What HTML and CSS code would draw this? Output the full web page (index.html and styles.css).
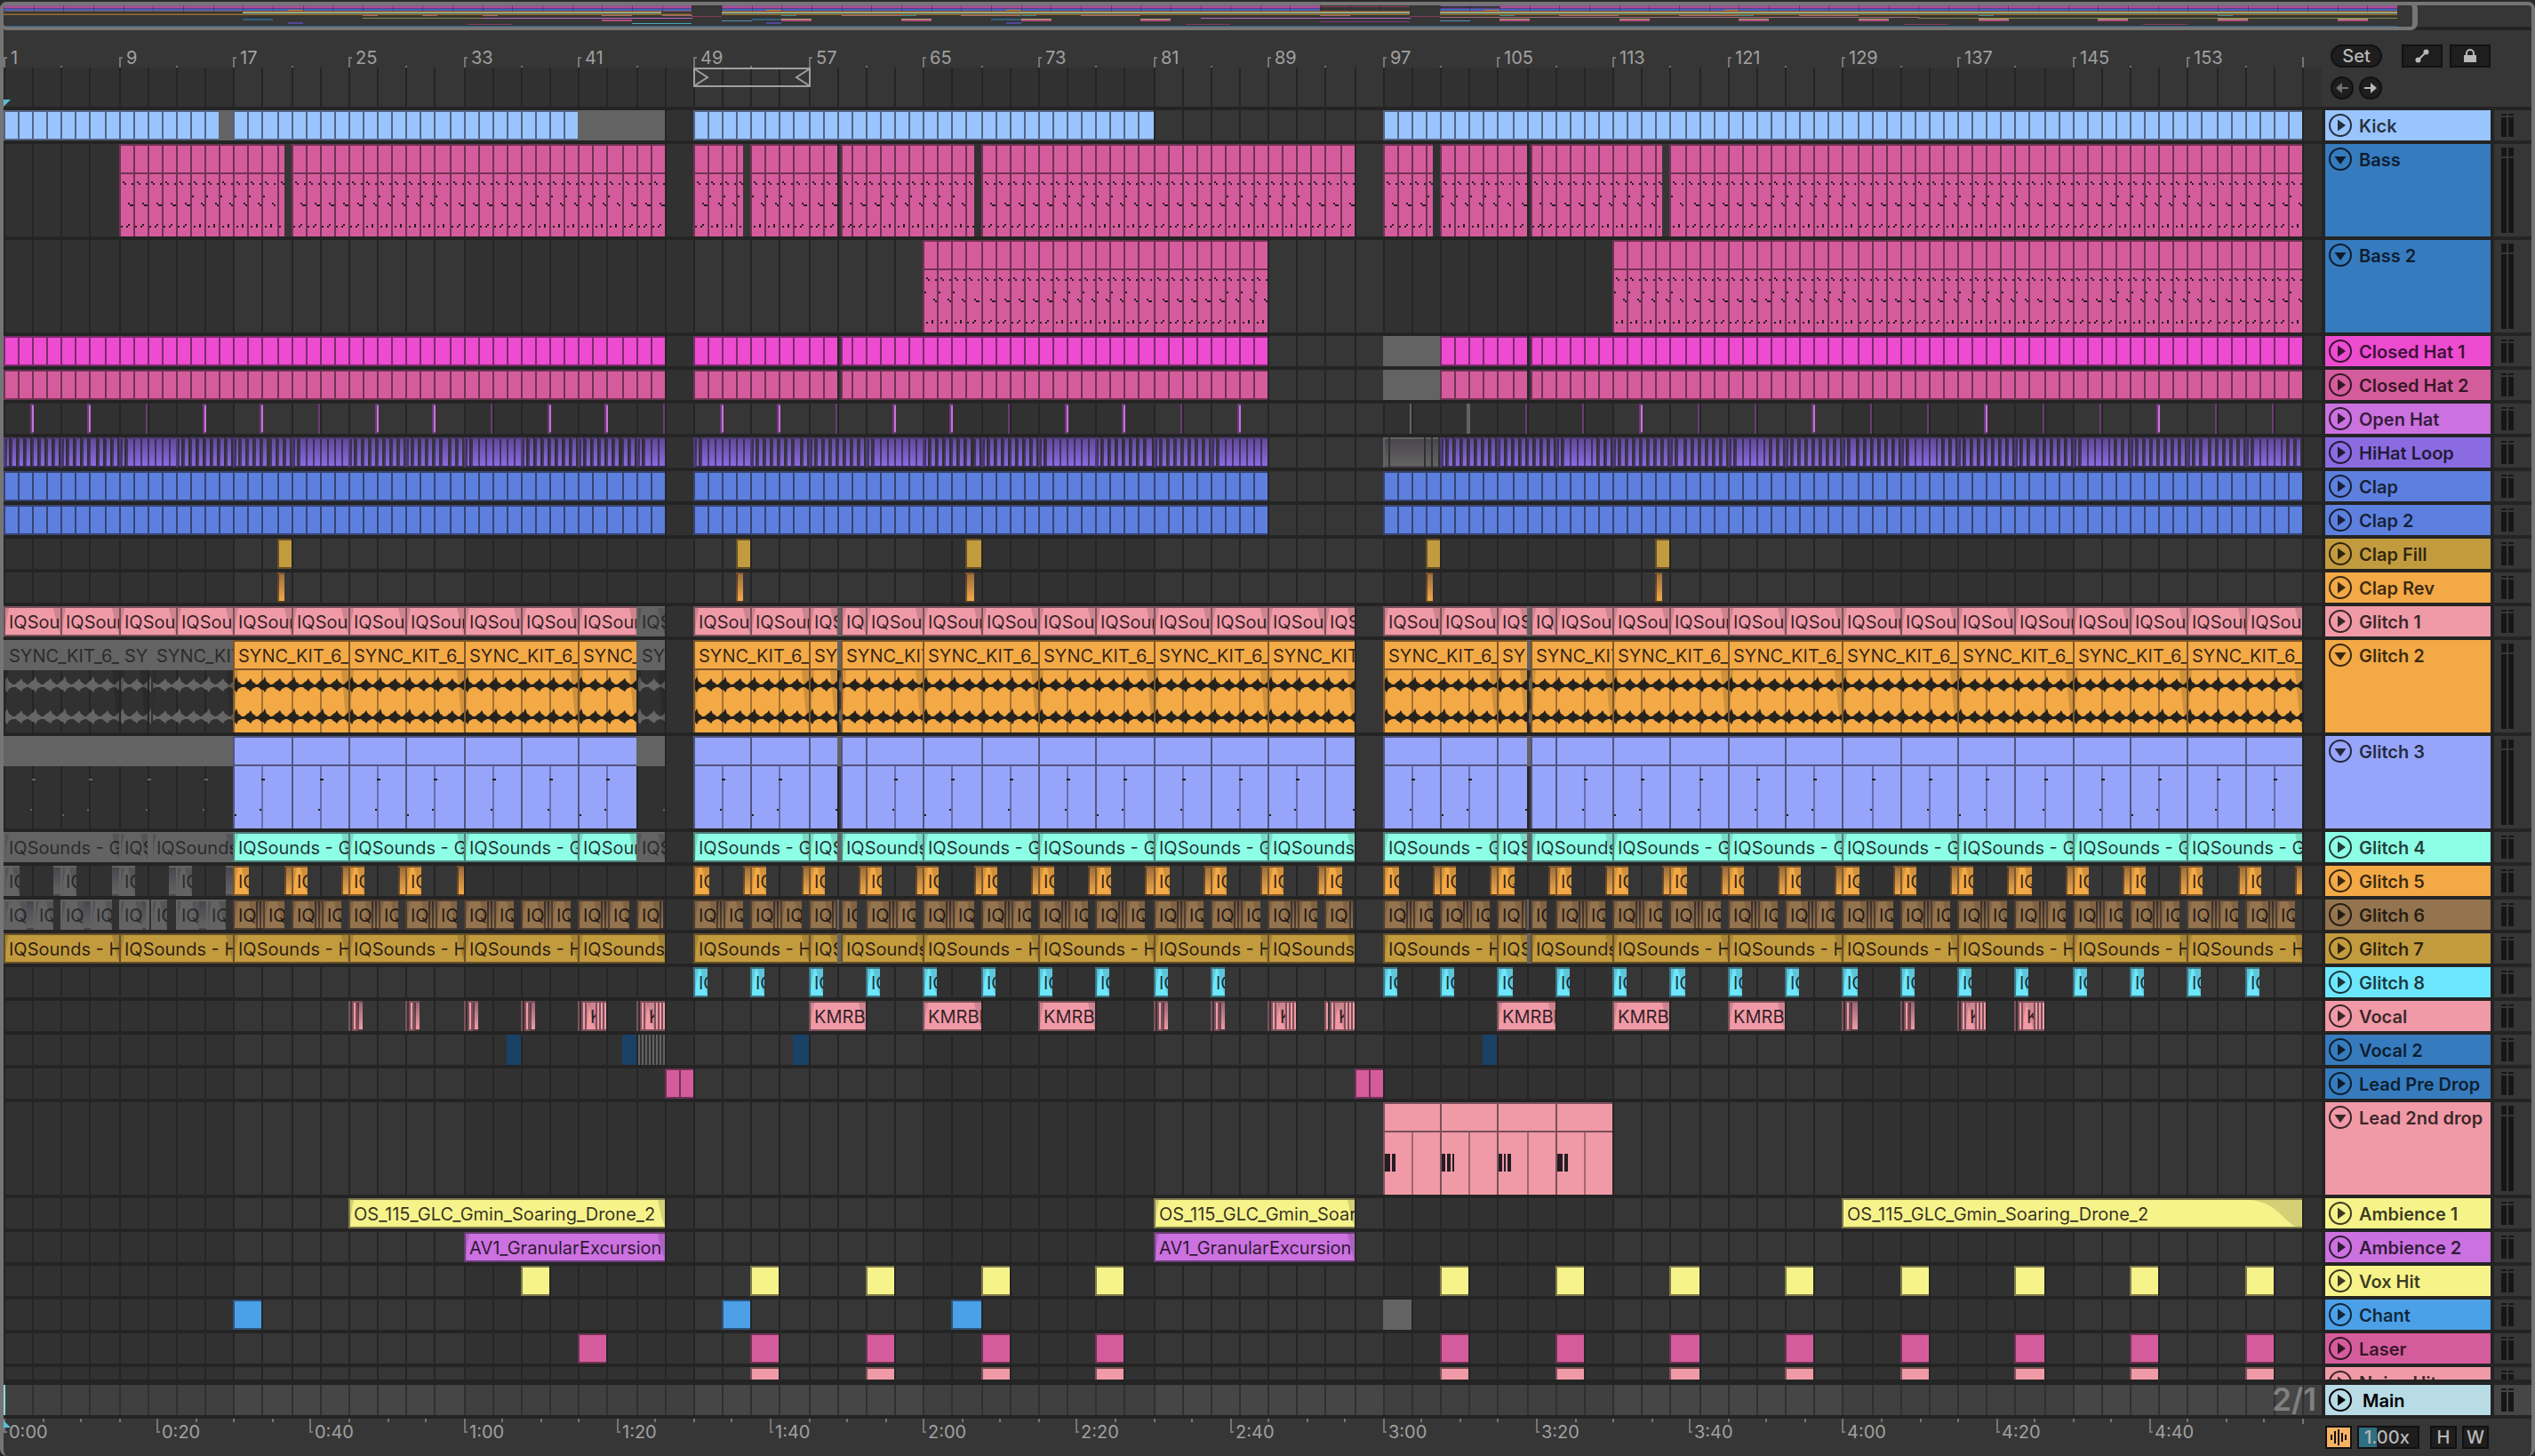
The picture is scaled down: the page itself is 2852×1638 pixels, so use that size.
FILE: index.html
```html
<!DOCTYPE html>
<html lang="en">

<head>
  <title>Arrangement</title>
  <meta charset="utf-8">
  <link rel="stylesheet" href="styles.css">
</head>

<body>
  <div class="window">

    <!-- Overview of the whole set -->
    <div class="overview">
      <svg id="overview" preserveAspectRatio="none"></svg>
      <div class="overview_frame"></div>
    </div>

    <!-- Bar ruler, loop brace and locator buttons -->
    <div class="top">
      <div class="rulers">
        <div class="ruler" id="ruler"></div>
        <div class="scrub" id="scrub"></div>
      </div>
      <div class="controls">
        <div class="controls_row">
          <button class="btn btn_set">Set</button>
          <button class="btn btn_tool btn_automation" aria-label="Automation mode">
            <svg width="16" height="16" viewBox="0 0 16 16"><path d="M3 13L13 3" stroke="currentColor" stroke-width="2" /><circle cx="3.5" cy="12.5" r="3" fill="currentColor" /><circle cx="12.5" cy="3.5" r="3" fill="currentColor" /></svg>
          </button>
          <button class="btn btn_tool" aria-label="Lock envelopes">
            <svg width="14" height="16" viewBox="0 0 14 16"><path d="M3 8V5a4 4 0 0 1 8 0v3" fill="none" stroke="currentColor" stroke-width="2" /><rect y="7" width="14" height="8" fill="currentColor" /></svg>
          </button>
        </div>
        <div class="controls_row">
          <button class="btn btn_round off" aria-label="Previous locator">
            <svg width="14" height="14" viewBox="0 0 14 14"><path d="M0 7L7 1V6H14V8H7V13Z" fill="currentColor" /></svg>
          </button>
          <button class="btn btn_round" aria-label="Next locator">
            <svg width="14" height="14" viewBox="0 0 14 14"><path d="M14 7L7 1V6H0V8H7V13Z" fill="currentColor" /></svg>
          </button>
        </div>
      </div>
    </div>

    <!-- Tracks -->
    <div class="tracks" id="tracks"></div>

    <!-- Main track -->
    <div class="track main" id="main"></div>

    <!-- Time ruler and view buttons -->
    <div class="bottom">
      <div class="time" id="time"></div>
      <div class="view">
        <button class="btn btn_small btn_wave" aria-label="Show waveforms">
          <svg width="18" height="18" viewBox="0 0 18 18"><path d="M1 6v6M5 2v14M9 0v18M13 4v10M17 6v6" stroke="currentColor" stroke-width="2" /></svg>
        </button>
        <input class="zoom" type="text" value="1.00x" aria-label="Waveform zoom">
        <button class="btn btn_small btn_h">H</button>
        <button class="btn btn_small">W</button>
      </div>
    </div>

  </div>

  <script src="arrangement.js"></script>
</body>

</html>
```
FILE: styles.css
```css
* {
  box-sizing: border-box;
}

body {
  margin: 0;
  padding-top: 2px;
  background: #2a2a2a;
  color: #a0a0a0;
  font-family: Inter, "Liberation Sans", sans-serif;
  font-size: 20px;
  overflow: hidden;
}

svg {
  display: block;
  flex: none;
}

.window {
  display: flex;
  flex-direction: column;
  height: calc(100vh - 2px);
  border: 4px solid #757575;
  border-bottom: none;
  border-radius: 8px;
  background: #363636;
}

/* overview */

.overview {
  position: relative;
  flex: none;
  height: 28px;
  border-bottom: 4px solid #242424;
}

.overview svg {
  width: 100%;
  height: 24px;
}

.overview_frame {
  position: absolute;
  top: -4px;
  bottom: -4px;
  left: -4px;
  right: 128px;
  border: 4px solid #757575;
  border-right-width: 6px;
  border-radius: 8px;
}

/* rulers */

.top {
  display: flex;
  flex: none;
  border-bottom: 4px solid #242424;
}

.rulers,
.time,
.lane {
  flex: 1;
  min-width: 0;
}

.ruler,
.scrub,
.time {
  position: relative;
  display: flex;
  overflow: hidden;
}

.ruler {
  height: 42px;
}

.scrub {
  height: 44px;
}

.layer {
  position: absolute;
  top: 0;
  left: 0;
  width: 100%;
  height: 100%;
}

.mark {
  flex: none;
  padding-left: 8px;
  line-height: 62px;
  white-space: nowrap;
}

.time .mark {
  padding-left: 6px;
  line-height: 30px;
}

.controls {
  display: flex;
  flex-direction: column;
  gap: 10px;
  width: 236px;
  padding: 16px 46px 8px 10px;
}

.controls_row {
  display: flex;
  gap: 6px;
}

.btn {
  display: flex;
  align-items: center;
  justify-content: center;
  height: 26px;
  padding: 0;
  border: 2px solid #111;
  background: #1e1e1e;
  color: #b8b8b8;
  font: 500 20px Inter, "Liberation Sans", sans-serif;
}

.btn_set {
  width: 58px;
  margin-right: auto;
  border-radius: 13px;
}

.btn_tool {
  width: 46px;
}

.btn_automation {
  margin-right: 2px;
}

.btn_round {
  width: 26px;
  border-radius: 50%;
}

.btn_round.off {
  color: #707070;
}

/* tracks */

.tracks {
  position: relative;
  flex: 1;
  min-height: 0;
  overflow: hidden;
}

.track {
  position: relative;
  display: flex;
  height: 38px;
  border-bottom: 4px solid #242424;
}

.track.tall {
  height: 108px;
}

.lane {
  position: relative;
  display: flex;
  overflow: hidden;
}

.head {
  display: flex;
  align-items: flex-start;
  flex: none;
  width: 194px;
  padding: 4px;
  gap: 8px;
  overflow: hidden;
  border: solid #242424;
  border-width: 0 4px;
  color: rgba(0, 0, 0, 0.76);
}

.fold {
  flex: none;
  padding: 0;
  border: none;
  background: none;
  color: inherit;
}

.name {
  font-size: 20px;
  font-weight: 600;
  line-height: 28px;
  white-space: nowrap;
}

.meter {
  display: grid;
  flex: none;
  grid-template: 2px 1fr / 6px 6px;
  gap: 2px;
  width: 42px;
  padding: 4px 8px;
  background: #363636;
}

.tall .meter {
  grid-template-rows: 10px 1fr;
}

.meter i {
  background: #161616;
}

/* clips */

.clip {
  position: relative;
  flex: none;
  overflow: hidden;
  border: 2px solid rgba(20, 15, 20, 0.53);
  border-right: none;
  background-color: var(--c);
  color: rgba(10, 5, 10, 0.83);
  font-size: 20px;
  line-height: 32px;
  white-space: nowrap;
}

.clip span {
  display: block;
  height: 30px;
  padding-left: 4px;
}

.tall .clip {
  border-bottom: none;
}

.tall .clip span {
  height: 32px;
  border-bottom: 2px solid rgba(20, 15, 20, 0.53);
}

.clip.off {
  border-color: transparent;
  background-color: #636363;
  color: #2b2b2b;
}

.tall .clip.off {
  background: linear-gradient(#636363 34px, transparent 34px) no-repeat;
  background-clip: border-box;
  background-origin: border-box;
}

.tall .clip.off span {
  border-color: transparent;
}

/* fades at both ends of an audio clip */
.fade::before,
.fade::after {
  content: "";
  position: absolute;
  top: 0;
  bottom: 0;
  width: 8px;
  background: rgba(0, 0, 0, 0.14);
}

.fade::before {
  left: 0;
  width: 4px;
  clip-path: polygon(0 0, 100% 0, 30% 50%, 0 100%);
}

.fade::after {
  right: 0;
  clip-path: polygon(0 0, 100% 0, 100% 100%, 50% 60%);
}

.tall .fade::before,
.tall .fade::after {
  top: 32px;
}

.dim {
  background-image: linear-gradient(rgba(40, 30, 50, 0.42), rgba(40, 30, 50, 0));
}

.long_fade {
  position: absolute;
  top: 0;
  right: 0;
}

/* main track */

.main {
  flex: none;
  height: 44px;
  border-top: 6px solid #242424;
}

.main .head {
  gap: 12px;
  color: #000;
}

.main .meter {
  background: #464646;
}

.quantize {
  position: absolute;
  right: 6px;
  bottom: 0;
  color: #808080;
  font-size: 35px;
  font-weight: 600;
  line-height: 36px;
}

/* bottom */

.bottom {
  display: flex;
  flex: none;
  height: 42px;
}

.view {
  display: flex;
  align-items: flex-start;
  width: 236px;
  padding: 8px 0 0 4px;
  gap: 6px;
}

.btn_small {
  width: 30px;
}

.btn_wave {
  background: #f7b266;
  color: #111;
}

.btn_h {
  margin-left: 6px;
}

.zoom {
  width: 70px;
  height: 26px;
  padding: 0 6px;
  border: 2px solid #111;
  background: linear-gradient(to right, #2f6f82 20px, #1e1e1e 20px);
  color: #b8b8b8;
  font: 500 20px Inter, "Liberation Sans", sans-serif;
}
```
FILE: arrangement.js
```javascript
// Visible length of the lanes, and where the song ends
var VISIBLE_BARS = 161.356;
var LAST_BAR = 160;
var SECONDS_PER_BAR = 1.875;

var PINK = "#d55c9c";
var ROSE = "#ef9aa6";
var ORANGE = "#f2a946";
var BLUE = "#367bbd";
var ROYAL = "#5d80de";
var GOLD = "#c39b3f";
var YELLOW = "#f6f38a";

var barWidth = 16;

// Lines are two pixels wide, so everything sits on even pixels
function snap(bar) {
  return Math.round(bar * barWidth / 2) * 2;
}

// Cut a range into clips at every multiple of step
function run(from, to, step, extra) {
  var clips = [];
  while (from < to) {
    var next = Math.min(to, (Math.floor(from / step) + 1) * step);
    clips.push(Object.assign({ from: from, to: next }, extra));
    from = next;
  }
  return clips;
}

function runs(list, step) {
  return list.flatMap(r => run(r[0], r[1], step, { off: r[2] }));
}

function hits(starts, length) {
  return starts.map(s => ({ from: s, to: s + length }));
}

function every(from, to, step) {
  var list = [];
  for (var b = from; b < to; b += step) list.push(b);
  return list;
}

var hatRanges = [[0, 46], [48, 58], [58.25, 88], [96, 100, true], [100, 106], [106.25, 160]];
var clapRanges = [[0, 46], [48, 88], [96, 160]];
var bassRanges = [[8, 19.5], [20, 46], [48, 51.5], [52, 58], [58.25, 67.5], [68, 94], [96, 99.5], [100, 106], [106.25, 115.5], [116, 160]];
var drops = [[48, 58], [58, 58.25, true], [58.25, 94], [96, 106], [106, 106.25, true], [106.25, 160]];
var intro = [[0, 10, true], [10, 10.25, true], [10.25, 16, true], [16, 44], [44, 46, true]];
var hitBars = [52, 60, 68, 76, 100, 108, 116, 124, 132, 140, 148, 156];

function openHat() {
  var clips = [];
  every(2, 160, 4).forEach(function (end) {
    if (end > 86 && end < 98) return;
    var wide = end < 90 ? (end - 10) % 12 != 0 : (end - 102) % 12 == 0;
    clips.push({ from: end - 0.125, to: end + (wide ? 0.125 : 0), off: end == 98 || end == 102 });
  });
  return clips;
}

function hihat() {
  var clips = [];
  every(0, 160, 0.5).forEach(function (b) {
    if ((b >= 46 && b < 48) || (b >= 88 && b < 96)) return;
    var phase = b % 12;
    var dense = b < 46 ? phase >= 8 : phase < 2.5;
    if (b >= 48 && b < 88) dense = phase < 4;
    if (b % 4 == 0) {
      clips.push({ from: b, to: b + 0.125, off: b >= 96 && b < 100 });
      clips.push({ from: b + 0.125, to: b + 0.375, dim: true, off: b >= 96 && b < 100 });
    } else {
      clips.push({ from: b, to: b + (dense ? 0.5 : 0.375), dim: true, off: b >= 96 && b < 100 });
    }
  });
  return clips;
}

function glitch5() {
  var clips = [];
  every(0, 161, 4).forEach(function (b) {
    if (b > 32 && b < 48) return;
    if (b != 0 && b != 48 && b != 96)
      clips.push({ from: b - 0.5, to: b, dim: true, off: b <= 16, quiet: true });
    if (b != 32 && b != 160)
      clips.push({ from: b, to: b + 1.125, off: b < 16 });
  });
  return clips.filter(c => c.from < 94 || c.from >= 96);
}

function glitch6() {
  var clips = [];
  every(0, 160, 4).forEach(function (b) {
    var off = b < 16;
    clips.push({ from: b, to: b + 1.625, off: off });
    clips.push({ from: b + 1.625, to: b + 1.875, off: off, dim: true, quiet: true });
    if (b == 44 || b == 92) return;
    if (b == 8 || b == 56 || b == 104) {
      clips.push({ from: b + 1.875, to: b + 2, off: off, dim: true, quiet: true });
      clips.push({ from: b + 2, to: b + 2.1, off: true, quiet: true });
      clips.push({ from: b + 2.25, to: b + 3.375, off: off });
      return;
    }
    clips.push({ from: b + 1.875, to: b + 2.125, off: off, dim: true, quiet: true });
    clips.push({ from: b + 2.125, to: b + 3.5, off: off });
  });
  return clips;
}

function vocal() {
  var clips = [];
  [24, 28, 32, 36, 80, 84, 128, 132].forEach(function (b) {
    clips.push({ from: b, to: b + 0.125, quiet: true });
    clips.push({ from: b + 0.25, to: b + 0.5, quiet: true });
    clips.push({ from: b + 0.5, to: b + 0.625, quiet: true });
    clips.push({ from: b + 0.625, to: b + 1, quiet: true, dim: true });
  });
  [40, 44, 88, 92, 136, 140].forEach(function (b) {
    clips.push({ from: b, to: b + 0.125, quiet: true });
    clips.push({ from: b + 0.25, to: b + 0.5, quiet: true });
    clips.push({ from: b + 0.5, to: b + 1.25 });
    [1.25, 1.5, 1.75].forEach(o => clips.push({ from: b + o, to: b + o + 0.25, quiet: true }));
  });
  [56, 64, 72, 104, 112, 120].forEach(b => clips.push({ from: b, to: b + 4 }));
  return clips.sort((a, b) => a.from - b.from);
}

function vocal2() {
  var clips = hits([35, 43, 55, 103], 1);
  every(44, 46, 0.25).forEach(b => clips.push({ from: b + 0.125, to: b + 0.25, off: true }));
  return clips.sort((a, b) => a.from - b.from);
}

var tracks = [
  { name: "Kick", color: "#99c4fe", clips: runs([[0, 15], [15, 16, true], [16, 40], [40, 46, true], [48, 80], [96, 160]], 1) },
  { name: "Bass", color: BLUE, clipColor: PINK, body: "bass", clips: runs(bassRanges, 1) },
  { name: "Bass 2", color: BLUE, clipColor: PINK, body: "bass", clips: runs([[64, 88], [112, 160]], 1) },
  { name: "Closed Hat 1", color: "#ed4bd0", clips: runs(hatRanges, 1) },
  { name: "Closed Hat 2", color: PINK, clips: runs(hatRanges, 1) },
  { name: "Open Hat", color: "#cb71e0", clips: openHat() },
  { name: "HiHat Loop", color: "#8a6be0", clips: hihat() },
  { name: "Clap", color: ROYAL, clips: runs(clapRanges, 1) },
  { name: "Clap 2", color: ROYAL, clips: runs(clapRanges, 1) },
  { name: "Clap Fill", color: GOLD, clips: hits([19, 51, 67, 99, 115], 1) },
  { name: "Clap Rev", color: ORANGE, clips: hits([19, 51, 67, 99, 115], 0.5).map(c => Object.assign(c, { dim: true })) },
  { name: "Glitch 1", color: ROSE, label: "IQSounds", fade: true, clips: runs([[0, 44], [44, 46, true]].concat(drops), 4) },
  { name: "Glitch 2", color: ORANGE, label: "SYNC_KIT_6_", fade: true, body: "wave", clips: runs(intro.concat(drops), 8) },
  { name: "Glitch 3", color: "#96a5f9", body: "glitch", clips: runs([[0, 16, true], [16, 44], [44, 46, true]].concat(drops), 4) },
  { name: "Glitch 4", color: "#8dffe6", label: "IQSounds - G", fade: true, clips: runs(intro.concat(drops), 8) },
  { name: "Glitch 5", color: ORANGE, label: "IQSounds", fade: true, clips: glitch5() },
  { name: "Glitch 6", color: "#94744e", label: "IQSounds", fade: true, clips: glitch6() },
  { name: "Glitch 7", color: GOLD, label: "IQSounds - H", fade: true, clips: runs([[0, 46]].concat(drops), 8) },
  { name: "Glitch 8", color: "#6de7fd", label: "IQSounds", fade: true, clips: hits(every(48, 88, 4).concat(every(96, 160, 4)), 1) },
  { name: "Vocal", color: ROSE, label: "KMRBI", fade: true, clips: vocal() },
  { name: "Vocal 2", color: BLUE, clipColor: "#1b4166", flat: true, clips: vocal2() },
  { name: "Lead Pre Drop", color: BLUE, clipColor: PINK, clips: runs([[46, 48], [94, 96]], 1) },
  { name: "Lead 2nd drop", color: ROSE, body: "lead", clips: runs([[96, 112]], 4) },
  { name: "Ambience 1", color: YELLOW, label: "OS_115_GLC_Gmin_Soaring_Drone_2", fade: true, clips: [{ from: 24, to: 46 }, { from: 80, to: 94 }, { from: 128, to: 160, longFade: true }] },
  { name: "Ambience 2", color: "#cb71e0", label: "AV1_GranularExcursion", fade: true, clips: [{ from: 32, to: 46 }, { from: 80, to: 94 }] },
  { name: "Vox Hit", color: YELLOW, clips: hits([36].concat(hitBars), 2) },
  { name: "Chant", color: "#4ba0e8", clips: hits([16, 50, 66], 2).concat([{ from: 96, to: 98, off: true }]) },
  { name: "Laser", color: PINK, clips: hits([40].concat(hitBars), 2) },
  { name: "Noise Hit", color: ROSE, clips: hits(hitBars, 2) }
];

function rect(x, y, w, h, fill) {
  return `<rect x="${x}" y="${y}" width="${w}" height="${h}" fill="${fill}"/>`;
}

// Two bar grid, shaded in blocks of sixteen bars
function grid(width, dark, light, line) {
  var out = "";
  for (var b = 0; b < VISIBLE_BARS; b += 16) {
    var x = snap(b);
    out += rect(x, 0, Math.min(width, snap(b + 16)) - x, "100%", (b / 16) % 2 ? light : dark);
  }
  for (b = 0; b <= LAST_BAR; b += 2) out += rect(snap(b), 0, 2, "100%", line);
  return `<svg class="layer" style="width:${width}px">${out}</svg>`;
}

// Level of the loop, one value for every eighth of a bar
var envelope = [6, 10, 4, 3, 1, 1, 2, 4, 5, 8, 4, 3, 1, 1, 3, 5];

function wave(clip, fill) {
  var out = "";
  [17, 53].forEach(function (mid) {
    var up = [], down = [];
    for (var b = clip.from; b <= clip.to; b += 0.125) {
      var amp = envelope[Math.round(b * 8) % 16];
      var x = Math.round((b - clip.from) * barWidth);
      up.push(x + "," + (mid - amp));
      down.unshift(x + "," + (mid + 1 + Math.round(amp * 0.7)));
    }
    out += `<polygon points="${up.concat(down).join(" ")}" fill="${fill}"/>`;
  });
  return out;
}

function bassNotes(b) {
  var phase = b % 12;
  var high = b < 96 ? phase >= 1 && phase <= 6 : phase >= 3 && phase <= 8;
  var out = [[2, 8, 2, 2], [4, 10, 2, 2], [12, 10, 2, 2]];
  if (high) out.push([0, 24, 2, 2], [10, 32, 2, 2], [12, 34, 2, 2], [2, 58, 2, 2], [8, 56, 2, 4]);
  else out.push([8, 32, 2, 2], [10, 34, 4, 2], [0, 58, 2, 2], [6, 58, 2, 2], [8, 56, 2, 2]);
  return out;
}

function body(kind, clip) {
  var out = "";
  var start = snap(clip.from) + 2;
  if (kind != "bass" && !clip.off) {
    for (var b = Math.floor(clip.from / 2) * 2 + 2; b < clip.to; b += 2)
      out += rect(snap(b) - start, 0, 2, 70, "rgba(20,15,20,.36)");
  }
  var fill = clip.off ? "#666" : "#241c22";
  if (kind == "wave") out += wave(clip, clip.off ? "#666" : "#26221c");
  var notes = [];
  if (kind == "bass") notes = bassNotes(Math.floor(clip.from));
  if (kind == "glitch" && clip.to - clip.from > 0.5) {
    var first = Math.floor(clip.from / 4) * 4;
    var mid = snap(first + 2) - start;
    notes = [[mid - 2, 48, 2, 2], [mid, 14, 4, 2]];
    if (clip.from % 12 == 4) notes.push([0, 54, 2, 2]);
  }
  if (kind == "lead") {
    notes = [[0, 24, 6, 20], [8, 24, 4, 20]];
    if (clip.from == 100) notes = [[0, 24, 4, 20], [6, 24, 4, 20], [12, 24, 2, 20]];
    if (clip.from == 104) notes = [[0, 24, 4, 20], [6, 24, 2, 20], [10, 24, 4, 20]];
  }
  notes.forEach(n => out += rect(n[0], n[1], n[2], n[3], fill));
  return `<svg width="${snap(clip.to) - start}" height="70">${out}</svg>`;
}

// Leave out the letters that would fall outside of the clip
function cut(label, width) {
  return (label || "").slice(0, Math.ceil(width / 10));
}

function lane(track) {
  var x = 0;
  return track.clips.map(function (clip) {
    var left = snap(clip.from);
    var right = Math.max(left + 2, snap(clip.to));
    var style = `margin-left:${left - x}px;width:${right - left}px`;
    var names = "clip";
    if (clip.off) names += " off";
    if (clip.dim) names += " dim";
    if (track.fade && right - left > 10 && !clip.longFade) names += " fade";
    if (track.flat) style += ";border:0";
    x = right;
    var inside = "";
    var hasText = track.label && !clip.quiet && right - left > 8;
    if (track.body || hasText)
      inside += `<span>${hasText ? cut(track.label, right - left) : ""}</span>`;
    if (track.body) inside += body(track.body, clip);
    if (clip.longFade)
      inside += `<svg class="long_fade" width="58" height="30"><path d="M0 0C30 2 38 26 52 30H58V0Z" fill="rgba(0,0,0,.14)"/></svg>`;
    return `<div class="${names}" style="${style}">${inside}</div>`;
  }).join("");
}

function head(name, color, open) {
  var arrow = open ? "M6.5 10H19.5L13 19Z" : "M10 6.5V19.5L19 13Z";
  return `<div class="head" style="background-color:${color}">
    <button class="fold" aria-label="Unfold ${name}"><svg width="26" height="26"><circle cx="13" cy="13" r="12" fill="none" stroke="currentColor" stroke-width="2"/><path d="${arrow}" fill="currentColor"/></svg></button>
    <div class="name">${name}</div>
  </div>
  <div class="meter"><i></i><i></i><i></i><i></i></div>`;
}

// Row of labels in flow, with the ticks on a layer above them
function marks(list, ticks) {
  var out = "";
  list.forEach(function (m, i) {
    var next = i + 1 < list.length ? list[i + 1].x : m.x + 100;
    out += `<div class="mark" style="width:${next - m.x}px">${m.text}</div>`;
  });
  return out + `<svg class="layer">${ticks}</svg>`;
}

function drawRulers(width) {
  var list = [];
  var ticks = "";
  for (var b = 0; b <= LAST_BAR; b += 4) {
    var x = snap(b);
    if (b == LAST_BAR) ticks += rect(x, 30, 2, 12, "#757575");
    else if (b % 8) ticks += rect(x, 40, 2, 2, "#757575");
    else {
      list.push({ x: x, text: b + 1 });
      ticks += rect(x, 30, 2, 12, "#757575") + rect(x, 30, 4, 2, "#757575");
    }
  }
  document.getElementById("ruler").innerHTML = marks(list, ticks);

  var l = snap(48), r = snap(56) + 2;
  document.getElementById("scrub").innerHTML = grid(width, "#313131", "#363636", "#252525") +
    `<svg class="layer"><path d="M${l + 1} 1H${r - 1}V21H${l + 1}ZM${l + 2} 2L${l + 16} 11L${l + 2} 20M${r - 2} 2L${r - 16} 11L${r - 2} 20" fill="none" stroke="#a0a0a0" stroke-width="2"/><path d="M0 36H8L0 44Z" fill="#5ac0d4"/></svg>`;

  list = [];
  ticks = "";
  for (var s = 0; s < 300; s += 5) {
    x = snap(s / SECONDS_PER_BAR);
    if (s % 20) ticks += rect(x, 0, 2, 4, "#757575");
    else {
      list.push({ x: x, text: Math.floor(s / 60) + ":" + String(s % 60).padStart(2, "0") });
      ticks += rect(x, 0, 2, 16, "#757575") + rect(x, 14, 4, 2, "#757575");
    }
  }
  ticks += rect(snap(LAST_BAR), 0, 2, 6, "#757575");
  ticks += `<path d="M0 2L8 10H0Z" fill="#5ac0d4"/>`;
  document.getElementById("time").innerHTML = marks(list, ticks);
}

// Small picture of the set: top, height, colour, ranges in bars
var strips = [
  [0, 1, "#7f5e9e", [[0, 46], [48, 88], [96, 160]]],
  [1, 3, "#b24b90", [[0, 46], [48, 88], [100, 160]]],
  [1, 1, "#8a3a60", [[88, 94]]],
  [3, 1, "#5a3f88", [[0, 46], [48, 88], [96, 160]]],
  [4, 2, "#4262b8", [[0, 46], [48, 88], [96, 160]]],
  [5, 2, "#b5803c", [[19, 20], [51, 52], [67, 68], [99, 100], [115, 116]]],
  [6, 1, "#855a4e", [[0, 46], [48, 94], [96, 160]]],
  [7, 1, "#b07c34", [[16, 44], [48, 94], [96, 160]]],
  [8, 1, "#7fd0c4", [[16, 44], [48, 94], [96, 160]]],
  [9, 1, "#6a5238", [[0, 46], [48, 94], [96, 160]]],
  [10, 1, "#94702a", [[0, 46], [48, 94], [96, 160]]],
  [11, 1, "#a36b74", [[24, 25], [28, 29], [32, 33], [40, 42], [44, 46], [56, 60], [64, 68], [72, 76], [88, 90], [104, 108], [112, 116], [120, 124]]],
  [11, 1, "#3f8a90", [[52, 53], [60, 61], [68, 69], [100, 101], [116, 117], [132, 133], [148, 149]]],
  [12, 1, "#8a3a60", [[46, 48], [94, 96]]],
  [13, 1, "#a36b74", [[96, 128]]],
  [14, 1, "#8a8848", [[24, 32], [128, 160]]],
  [14, 1, "#b868c4", [[32, 46], [80, 94]]],
  [15, 2, "#326080", [[16, 18], [50, 52], [66, 68]]],
  [15, 1, "#b0ae68", hitBars.map(b => [b, b + 2])],
  [16, 2, "#b04e82", [[40, 42]].concat(hitBars.map(b => [b, b + 2]))],
  [18, 1, "#803878", [[88, 94]]],
  [17, 1, "#5890b8", [[48, 50], [96, 98]]],
  [19, 2, "#50489a", [[19, 20], [51, 52], [67, 68]]],
  [20, 1, "#48a8b8", [[42, 46]]],
  [21, 1, "#7a3c58", [[31, 34], [79, 82], [127, 130], [143, 146]]],
  [23, 1, "#2f6088", [[0, 160]]]
];

function drawOverview(width) {
  // the overview is a little wider than the lanes
  var scale = (width - 151) / LAST_BAR;
  var out = "";
  strips.forEach(function (s) {
    s[3].forEach(r => out += rect(Math.round(r[0] * scale), s[0], Math.round((r[1] - r[0]) * scale), s[1], s[2]));
  });
  for (var b = 0; b < LAST_BAR; b += 2)
    out += rect(Math.round(b * scale), 0, 1, 7, "rgba(40,30,60,.4)");
  document.getElementById("overview").innerHTML = out;
}

function draw() {
  var width = document.getElementById("ruler").clientWidth;
  barWidth = width / VISIBLE_BARS;

  drawOverview(document.getElementById("overview").clientWidth);
  drawRulers(width);

  document.getElementById("tracks").innerHTML = grid(width, "#313131", "#363636", "#252525") +
    tracks.map(t => `<div class="track${t.body ? " tall" : ""}">
      <div class="lane" style="--c:${t.clipColor || t.color}">${lane(t)}</div>
      ${head(t.name, t.color, t.body)}
    </div>`).join("");

  document.getElementById("main").innerHTML = `<div class="lane">
      ${grid(width, "#404040", "#464646", "#303030")}
      <svg class="layer">${rect(0, 0, 2, 34, "#8fdbe2")}</svg>
      <div class="quantize">2/1</div>
    </div>` + head("Main", "#b8dbe6", false);
}

draw();
window.addEventListener("resize", draw);
```
